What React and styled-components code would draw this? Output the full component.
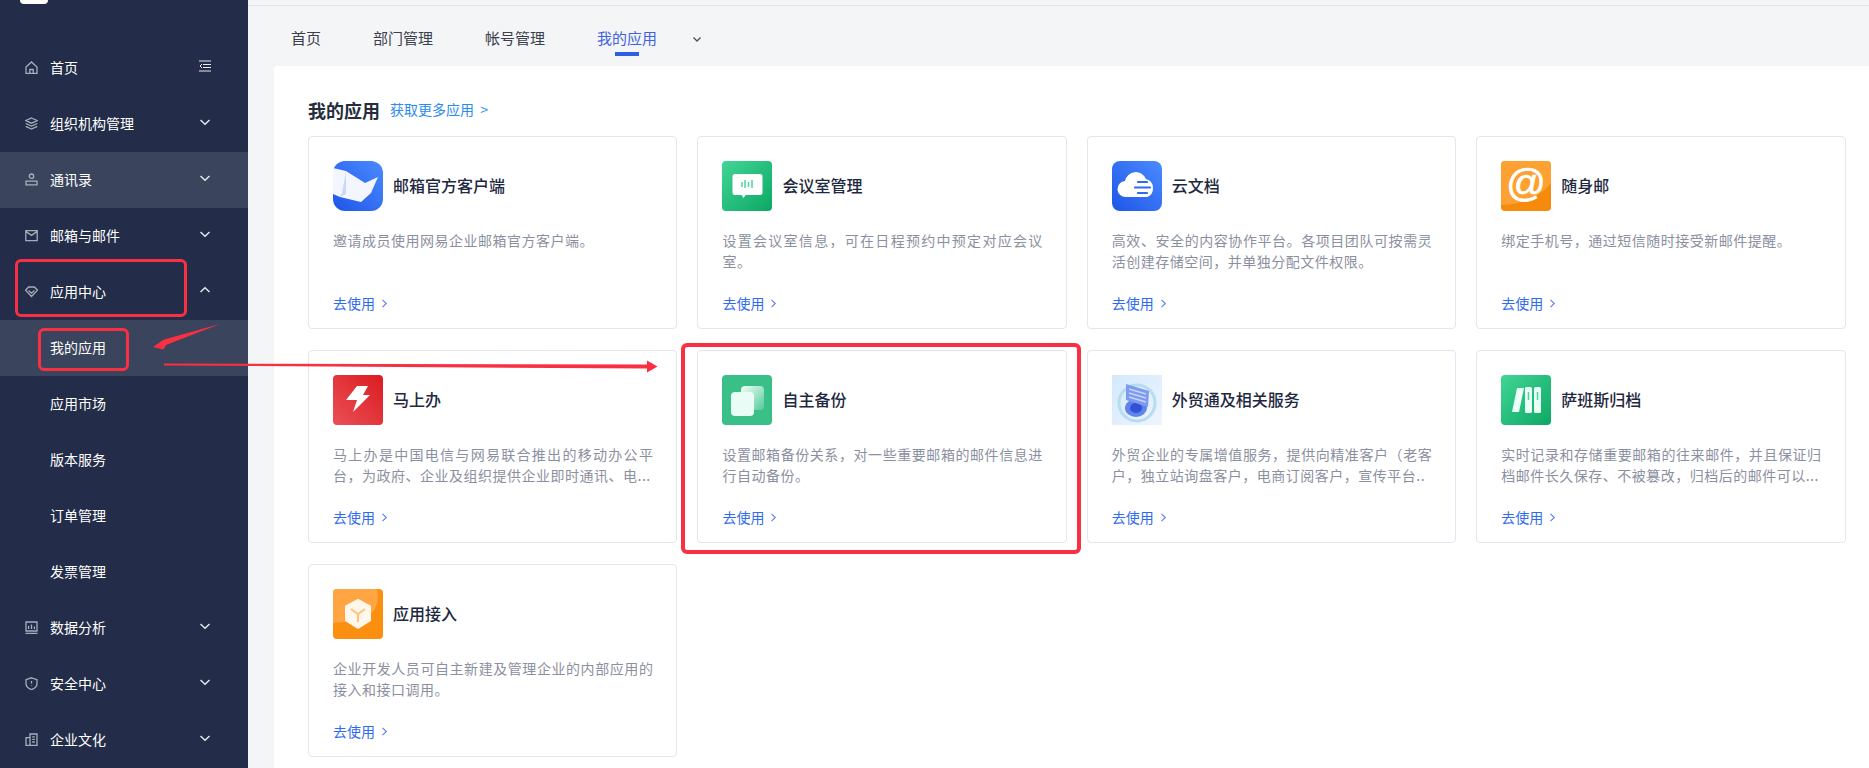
import React from "react";
import styled, { createGlobalStyle } from "styled-components";

const Global = createGlobalStyle`
  html, body { margin: 0; padding: 0; background: #fff; }
  * { box-sizing: border-box; }
  body { font-family: "Noto Sans CJK SC", "Noto Sans", sans-serif; }
`;

const Page = styled.div`
  position: relative;
  display: flex;
  width: 1869px;
  height: 768px;
  overflow: hidden;
`;

const Sidebar = styled.aside`
  flex: 0 0 248px;
  height: 768px;
  background: #232d49;
  display: flex;
  flex-direction: column;
`;

const LogoStrip = styled.div`
  height: 40px;
  padding-left: 20px;
`;

const LogoMark = styled.div`
  width: 28px;
  height: 4px;
  background: #fff;
  border-radius: 0 0 6px 6px;
`;

const NavRow = styled.div`
  flex: 0 0 56px;
  display: flex;
  align-items: center;
  padding-left: ${(p) => (p.$sub ? "50px" : "25px")};
  padding-right: 37px;
  padding-bottom: 2px;
  color: #fff;
  font-size: 14px;
  background: ${(p) => (p.$active ? "#3a445d" : "transparent")};
`;

const NavIcon = styled.svg`
  width: 13px;
  height: 13px;
  margin-right: 12px;
  flex: none;
  fill: none;
  stroke: #a8adba;
  stroke-width: 1.3;
`;

const NavLabel = styled.span`
  flex: 1;
  line-height: 20px;
`;

const NavEnd = styled.svg`
  width: 12px;
  height: 12px;
  flex: none;
  margin-bottom: 3px;
  fill: none;
  stroke: #e8eaf0;
  stroke-width: 1.4;
`;

const Main = styled.main`
  flex: 1;
  min-width: 0;
  height: 768px;
  background: #f4f5f7;
  display: flex;
  flex-direction: column;
`;

const TopBar = styled.header`
  flex: 0 0 61px;
  margin-top: 5px;
  border-top: 1px solid #e3e5ea;
  display: flex;
  align-items: flex-start;
  padding: 0 0 0 43px;
`;

const Tab = styled.div`
  position: relative;
  height: 50px;
  margin-right: 52px;
  padding-top: 21px;
  font-size: 15px;
  line-height: 21px;
  color: ${(p) => (p.$active ? "#3f63e0" : "#3a3f4b")};
`;

const TabBar = styled.i`
  position: absolute;
  left: 18px;
  bottom: 0;
  width: 24px;
  height: 4px;
  background: #2b60e4;
`;

const TabMore = styled.svg`
  width: 10px;
  height: 10px;
  margin: 28px 0 0 -17px;
  fill: none;
  stroke: #4a4f5c;
  stroke-width: 1.3;
`;

const Panel = styled.section`
  flex: 1;
  margin-left: 26px;
  padding: 30px 23.4px 0 34px;
  background: #fff;
  border-radius: 4px 0 0 0;
`;

const PanelHead = styled.div`
  height: 28px;
  margin-bottom: 12px;
  display: flex;
  align-items: center;
`;

const PanelTitle = styled.h2`
  margin: 0 10px 0 0;
  font-size: 18px;
  font-weight: 700;
  line-height: 28px;
  color: #262d3d;
`;

const MoreLink = styled.a`
  margin-top: -2px;
  font-size: 14px;
  color: #2b8cf0;
  line-height: 20px;
`;

const CardGrid = styled.div`
  display: grid;
  grid-template-columns: repeat(4, 1fr);
  grid-auto-rows: 193px;
  column-gap: 20px;
  row-gap: 21px;
`;

const Card = styled.article`
  position: relative;
  border: 1px solid #e2e6ee;
  border-radius: 4px;
  padding: 24px 24px 0;
  display: flex;
  flex-direction: column;
  background: #fff;
`;

const CardHead = styled.div`
  display: flex;
  align-items: center;
  height: 50px;
`;

const CardIcon = styled.svg`
  width: 50px;
  height: 50px;
  flex: none;
  margin-right: 10px;
`;

const CardTitle = styled.h3`
  margin: -2px 0 0;
  font-size: 16px;
  font-weight: 500;
  color: #1e2840;
  line-height: 24px;
`;

const CardDesc = styled.p`
  margin: 19px -1px 0 0;
  height: 42px;
  font-size: 14px;
  letter-spacing: 0.5px;
  line-height: 21px;
  text-align: justify;
  color: #8b90a0;
`;

const CardLink = styled.a`
  margin-top: 21px;
  display: flex;
  align-items: center;
  font-size: 14px;
  line-height: 20px;
  color: #2f6bf0;
`;

const LinkArrow = styled.svg`
  width: 7px;
  height: 9px;
  margin-left: 6px;
  fill: none;
  stroke: #5b7ff0;
  stroke-width: 1.1;
`;

const Mark = styled.div`
  position: absolute;
  border: ${(p) => p.$w || 3}px solid #f92f42;
  border-radius: 6px;
  pointer-events: none;
`;

const CenterMark = styled(Mark)`
  left: 15px;
  top: 259px;
  width: 172px;
  height: 58px;
`;

const MenuMark = styled(Mark)`
  left: 38px;
  top: 328px;
  width: 91px;
  height: 43px;
`;

const CardMark = styled(Mark)`
  left: 681px;
  top: 343px;
  width: 400px;
  height: 211px;
`;

const ArrowLayer = styled.svg`
  position: absolute;
  left: 0;
  top: 0;
  width: 1869px;
  height: 768px;
  pointer-events: none;
`;

const Chevron = ({ up }) => (
  <NavEnd viewBox="0 0 12 12">
    <path d={up ? "M1.500 8 6 3.800 10.500 8" : "M1.500 4 6 8.200 10.500 4"} />
  </NavEnd>
);

const icons = {
  home: <path d="M1 6 6.500 1 12 6v6.300H1zM4.800 12.300V8.500h3.400v3.800" />,
  stack: <path d="M6.500 1 12.300 3.600 6.500 6.200.7 3.600zM.7 6.500l5.800 2.600 5.800-2.600M.7 9.400 6.500 12l5.800-2.600" />,
  user: <path d="M6.500 1a2.200 2.200 0 1 1 0 4.400 2.200 2.200 0 0 1 0-4.400zM1 8.200h11v3.600H1z" />,
  mail: <path d="M.8 1.600h11.400v10H.8zM.8 2.400l5.700 4 5.700-4" />,
  gem: <path d="M3.600 2h5.800L12.500 5.200 6.500 11.500.5 5.200zM3.600 5.600l2.900 2.600 2.900-2.600" />,
  chart: <path d="M1 1h11v9H1zM.5 12.400h12M3.600 8V5M6.500 8V3.600M9.400 8V5.600" />,
  shield: <path d="M6.500.8 12 2.600v4c0 3-2.400 5-5.500 6C3.400 11.600 1 9.600 1 6.600v-4zM6.500 4v2.600M6.500 8.200v.6" />,
  build: <path d="M1 12.300V4.600h4M5 12.300V1h7v11.300M.3 12.300h12.400M7.200 3.800h2.600M7.200 6.400h2.600M7.200 9h2.600" />,
};

const menu = [
  { t: "首页", i: "home", end: "fold" },
  { t: "组织机构管理", i: "stack", end: "down" },
  { t: "通讯录", i: "user", end: "down", active: true },
  { t: "邮箱与邮件", i: "mail", end: "down" },
  { t: "应用中心", i: "gem", end: "up" },
  { t: "我的应用", sub: true, active: true },
  { t: "应用市场", sub: true },
  { t: "版本服务", sub: true },
  { t: "订单管理", sub: true },
  { t: "发票管理", sub: true },
  { t: "数据分析", i: "chart", end: "down" },
  { t: "安全中心", i: "shield", end: "down" },
  { t: "企业文化", i: "build", end: "down" },
];

const Defs = () => (
  <svg width="0" height="0" style={{ position: "absolute" }}>
    <defs>
      <linearGradient id="gBlue" x1="1" y1="0" x2="0" y2="1">
        <stop offset="0" stopColor="#4a8bff" />
        <stop offset="1" stopColor="#1f55e8" />
      </linearGradient>
      <linearGradient id="gGreen" x1="0" y1="0" x2="1" y2="1">
        <stop offset="0" stopColor="#41d596" />
        <stop offset="1" stopColor="#0da864" />
      </linearGradient>
      <linearGradient id="gRed" x1="0" y1="1" x2="1" y2="0">
        <stop offset="0" stopColor="#ea5057" />
        <stop offset="1" stopColor="#da1c20" />
      </linearGradient>
      <linearGradient id="gFade" x1="0" y1="0" x2="1" y2="1">
        <stop offset="0" stopColor="#f4fffb" />
        <stop offset="1" stopColor="#f4fffb" stopOpacity="0.15" />
      </linearGradient>
      <linearGradient id="gPale" x1="0" y1="0" x2="1" y2="1">
        <stop offset="0" stopColor="#d3e9fb" />
        <stop offset="1" stopColor="#eef4ff" />
      </linearGradient>
    </defs>
  </svg>
);

const Tile = ({ fill, children }) => (
  <CardIcon viewBox="0 0 50 50">
    <rect width="50" height="50" rx="4" fill={fill} />
    {children}
  </CardIcon>
);

const MailIcon = () => (
  <CardIcon viewBox="0 0 50 50">
    <rect width="50" height="50" rx="12" fill="url(#gBlue)" />
    <path d="M0 7 13 10 32 22 45 16 38 32 28 41 7 36 0 33z" fill="#f3f6ff" />
    <path d="M13 10 9 32 7 36 13 33z" fill="#cdd6f2" />
  </CardIcon>
);

const MeetingIcon = () => (
  <Tile fill="url(#gGreen)">
    <path d="M13 13h25a2.500 2.500 0 0 1 2.500 2.500v16a2.500 2.500 0 0 1-2.500 2.500H23.500L21.500 37l-2-3H13a2.500 2.500 0 0 1-2.500-2.500v-16A2.500 2.500 0 0 1 13 13z" fill="#fff" />
    <path d="M20 21v5M23 19v8M26.500 21v5M30 19v8" stroke="#4fd8a0" strokeWidth="1.500" />
  </Tile>
);

const CloudIcon = () => (
  <CardIcon viewBox="0 0 50 50">
    <rect width="50" height="50" rx="8" fill="url(#gBlue)" />
    <path d="M14 36a8 8 0 0 1-1-16 11 11 0 0 1 21-2 9.500 9.500 0 0 1 1 18z" fill="#fff" />
    <path d="M26 21h9M23 26.500h15M26 32h9" stroke="#2f6bf0" strokeWidth="2.200" strokeLinecap="round" />
  </CardIcon>
);

const AtIcon = () => (
  <Tile fill="#f68a0c">
    <path d="M0 4a4 4 0 0 1 4-4h42a4 4 0 0 1 4 4v18C38 38 16 44 0 44z" fill="#ffa93f" opacity="0.75" />
    <text x="25" y="34.500" textAnchor="middle" fontFamily="Liberation Sans, sans-serif" fontSize="39" fill="#fff" stroke="#fff" strokeWidth="0.7">@</text>
  </Tile>
);

const BoltIcon = () => (
  <Tile fill="url(#gRed)">
    <path d="M24 11h11l-5 9h7L20 37l4-12h-11z" fill="#fff" />
  </Tile>
);

const BackupIcon = () => (
  <Tile fill="#39c088">
    <rect x="19" y="11" width="23" height="24" rx="4" fill="url(#gFade)" />
    <rect x="9" y="17" width="23" height="24" rx="4" fill="#e9fcf6" />
  </Tile>
);

const TradeIcon = () => (
  <CardIcon viewBox="0 0 50 50">
    <rect width="50" height="50" fill="url(#gPale)" />
    <circle cx="25" cy="28" r="18" fill="none" stroke="#b6dcf0" strokeWidth="3" />
    <ellipse cx="24" cy="33" rx="11" ry="9" fill="#5f83ea" />
    <ellipse cx="24" cy="33" rx="6" ry="5" fill="#2f52d6" />
    <path d="M14 9 37 16 36 32 14 25z" fill="#7d9af0" />
    <path d="M17 14 34 19M17 18 34 23M17 22 34 27" stroke="#c5d5fb" strokeWidth="1.500" />
  </CardIcon>
);

const ArchiveIcon = () => (
  <Tile fill="url(#gGreen)">
    <path d="M16 13h7l-5 24h-7z" fill="#eafff6" strokeLinejoin="round" />
    <rect x="24" y="12" width="7" height="26" rx="1.500" fill="#eafff6" />
    <rect x="33" y="12" width="7" height="26" rx="1.500" fill="#eafff6" />
    <path d="M27.500 17v8M36.500 17v8" stroke="#49d59a" strokeWidth="1.500" />
  </Tile>
);

const CubeIcon = () => (
  <Tile fill="#fb8f10">
    <path d="M0 4a4 4 0 0 1 4-4h40c2 10 0 24-12 28C20 32 10 33 0 34z" fill="#ffaa4b" opacity="0.85" />
    <path d="M25 11 37 17.500v14L25 39 13 31.500v-14z" fill="#fff7ec" stroke="#fff7ec" strokeWidth="2" strokeLinejoin="round" />
    <path d="M18 20 25 25 32 20M25 25v8" fill="none" stroke="#ffc27c" strokeWidth="2" />
  </Tile>
);

const cards = [
  { t: "邮箱官方客户端", d: "邀请成员使用网易企业邮箱官方客户端。", I: MailIcon },
  { t: "会议室管理", d: "设置会议室信息，可在日程预约中预定对应会议室。", I: MeetingIcon },
  { t: "云文档", d: "高效、安全的内容协作平台。各项目团队可按需灵活创建存储空间，并单独分配文件权限。", I: CloudIcon },
  { t: "随身邮", d: "绑定手机号，通过短信随时接受新邮件提醒。", I: AtIcon },
  { t: "马上办", d: "马上办是中国电信与网易联合推出的移动办公平台，为政府、企业及组织提供企业即时通讯、电...", I: BoltIcon },
  { t: "自主备份", d: "设置邮箱备份关系，对一些重要邮箱的邮件信息进行自动备份。", I: BackupIcon },
  { t: "外贸通及相关服务", d: "外贸企业的专属增值服务，提供向精准客户（老客户，独立站询盘客户，电商订阅客户，宣传平台..", I: TradeIcon },
  { t: "萨班斯归档", d: "实时记录和存储重要邮箱的往来邮件，并且保证归档邮件长久保存、不被篡改，归档后的邮件可以...", I: ArchiveIcon },
  { t: "应用接入", d: "企业开发人员可自主新建及管理企业的内部应用的接入和接口调用。", I: CubeIcon },
];

export default function App() {
  return (
    <Page>
      <Global />
      <Defs />
      <Sidebar>
        <LogoStrip>
          <LogoMark />
        </LogoStrip>
        {menu.map((m) => (
          <NavRow key={m.t} $sub={m.sub} $active={m.active}>
            {m.i && <NavIcon viewBox="0 0 13 13">{icons[m.i]}</NavIcon>}
            <NavLabel>{m.t}</NavLabel>
            {m.end === "fold" && (
              <NavEnd viewBox="0 0 12 12">
                <path d="M0 1h12M4 4.500h8M4 7.500h8M0 11h12M3 4 1 6l2 2" strokeWidth="1" />
              </NavEnd>
            )}
            {m.end === "down" && <Chevron />}
            {m.end === "up" && <Chevron up />}
          </NavRow>
        ))}
      </Sidebar>
      <Main>
        <TopBar>
          <Tab>首页</Tab>
          <Tab>部门管理</Tab>
          <Tab>帐号管理</Tab>
          <Tab $active>
            我的应用
            <TabBar />
          </Tab>
          <TabMore viewBox="0 0 10 10">
            <path d="M1.500 3.500 5 7l3.500-3.500" />
          </TabMore>
        </TopBar>
        <Panel>
          <PanelHead>
            <PanelTitle>我的应用</PanelTitle>
            <MoreLink>获取更多应用 &nbsp;&gt;</MoreLink>
          </PanelHead>
          <CardGrid>
            {cards.map(({ t, d, I }) => (
              <Card key={t}>
                <CardHead>
                  <I />
                  <CardTitle>{t}</CardTitle>
                </CardHead>
                <CardDesc>{d}</CardDesc>
                <CardLink>
                  去使用
                  <LinkArrow viewBox="0 0 7 9">
                    <path d="M1.500 .8 5.300 4.500 1.500 8.200" />
                  </LinkArrow>
                </CardLink>
              </Card>
            ))}
          </CardGrid>
        </Panel>
      </Main>
      <CenterMark />
      <MenuMark />
      <CardMark $w={4} />
      <ArrowLayer viewBox="0 0 1869 768">
        <path d="M220 324 164 339.500 153 347 163.500 349.500 166 345z" fill="#f92f42" />
        <path d="M164 363.500 647 364.500 647 360.500 657.500 366.500 647 372.500 647 368.500 164 365.500z" fill="#f92f42" />
      </ArrowLayer>
    </Page>
  );
}
